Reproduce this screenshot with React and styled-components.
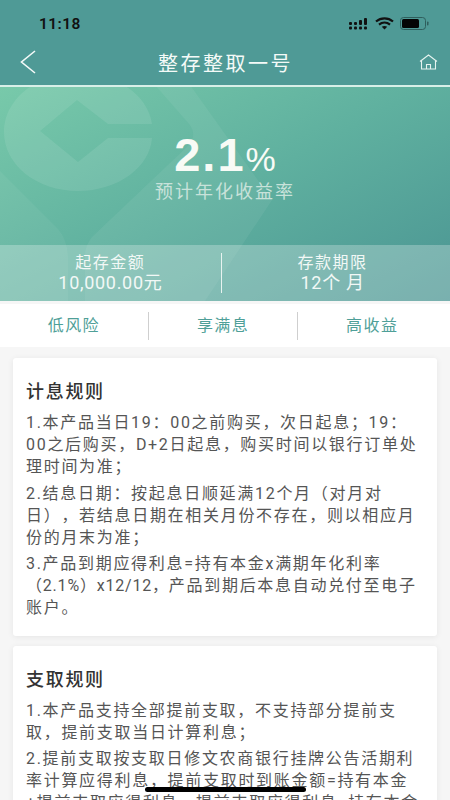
import styled, { createGlobalStyle } from "styled-components";

const GlobalStyle = createGlobalStyle`
  html, body {
    margin: 0;
    padding: 0;
    background: #f6f6f6;
  }
  body {
    width: 450px;
    height: 800px;
    overflow: hidden;
    font-family: "Roboto", "Noto Sans CJK SC", sans-serif;
    text-spacing-trim: space-all;
  }
`;

const Page = styled.div`
  position: relative;
  width: 450px;
  height: 800px;
  overflow: hidden;
  background: #f6f6f6;
`;

const TopBar = styled.header`
  height: 87px;
  background: #4f9a96;
  border-bottom: 2px solid #d8efe8;
  box-sizing: border-box;
  display: flex;
  flex-direction: column;
`;

const StatusRow = styled.div`
  height: 47px;
  display: flex;
  align-items: center;
  justify-content: space-between;
  padding: 0 21px 0 39px;
`;

const Clock = styled.span`
  font-size: 15.5px;
  font-weight: 600;
  color: #111;
  letter-spacing: 0.4px;
`;

const StatusIcons = styled.div`
  display: flex;
  align-items: center;
  gap: 6px;
`;

const NavRow = styled.div`
  flex: 1;
  display: flex;
  align-items: center;
  justify-content: space-between;
  padding: 0 12px 8px 20px;
`;

const NavTitle = styled.h1`
  margin: 0 0 0 -4px;
  font-size: 20px;
  font-weight: 400;
  color: #f4faf8;
  letter-spacing: 2.5px;
`;

const Hero = styled.section`
  position: relative;
  height: 214px;
  overflow: hidden;
  background: linear-gradient(152deg, #78c9aa 0%, #5fb09f 50%, #4b9593 100%);
  display: flex;
  flex-direction: column;
`;

const Watermark = styled.svg`
  position: absolute;
  left: 0;
  top: 0;
`;

const RateBlock = styled.div`
  position: relative;
  flex: 1;
  display: flex;
  flex-direction: column;
  align-items: center;
  padding-top: 45px;
  box-sizing: border-box;
`;

const Rate = styled.div`
  display: flex;
  align-items: baseline;
  color: #f8fbf6;
  line-height: 46px;
`;

const RateValue = styled.span`
  font-family: "Liberation Sans", sans-serif;
  font-size: 47px;
  font-weight: 700;
  letter-spacing: 2px;
`;

const RateUnit = styled.span`
  font-family: "Liberation Sans", sans-serif;
  font-size: 34px;
  font-weight: 400;
`;

const RateLabel = styled.div`
  font-size: 18px;
  color: #c8e2da;
  letter-spacing: 2px;
  line-height: 24px;
  margin-top: -2px;
`;

const Facts = styled.div`
  position: relative;
  height: 56px;
  padding-right: 7px;
  background: rgba(255, 255, 255, 0.26);
  display: flex;
  align-items: center;
`;

const Fact = styled.div`
  flex: 1;
  text-align: center;
  color: #f2f8f6;
  font-size: 16px;
  letter-spacing: 1.5px;
  line-height: 20px;
`;

const FactValue = styled.div`
  font-size: 18px;
  letter-spacing: 0.7px;
`;

const FactDivider = styled.div`
  width: 1.5px;
  height: 40px;
  background: #e8f3f0;
`;

const TagBar = styled.div`
  height: 43px;
  margin-top: 3px;
  padding: 0 4px 3px 0;
  box-sizing: border-box;
  background: #fff;
  display: flex;
  align-items: center;
`;

const Tag = styled.div`
  flex: 1;
  text-align: center;
  color: #4f9f98;
  font-size: 16px;
  letter-spacing: 1.4px;
`;

const TagDivider = styled.div`
  width: 1.5px;
  height: 28px;
  margin-top: 3px;
  background: #cfcfcf;
`;

const Content = styled.main`
  padding: 11px 13px 0;
  display: flex;
  flex-direction: column;
  gap: 10px;
`;

const Card = styled.article`
  background: #fff;
  border-radius: 3px;
  box-shadow: 0 1px 6px rgba(0, 0, 0, 0.07);
  padding: 21px 13px 12px;
`;

const CardTitle = styled.h2`
  margin: 0 0 8px;
  font-size: 18px;
  font-weight: 500;
  letter-spacing: 1.7px;
  line-height: 25px;
  color: #333;
`;

const Paragraph = styled.p`
  margin: 0 0 4.5px;
  font-size: 16px;
  letter-spacing: 1.7px;
  line-height: 22px;
  color: #555;
`;

const TightRun = styled.span`
  letter-spacing: 0.8px;
`;

const HomeIndicator = styled.div`
  position: absolute;
  left: 145px;
  bottom: 8px;
  width: 161px;
  height: 5px;
  border-radius: 3px;
  background: #000;
`;

const SignalIcon = () => (
  <svg width="20" height="12" viewBox="0 0 20 12" fill="#111">
    <rect x="0" y="4" width="3" height="3" rx="1" />
    <rect x="0" y="8.5" width="3" height="3" rx="1" />
    <rect x="5" y="4" width="3" height="3" rx="1" />
    <rect x="5" y="8.5" width="3" height="3" rx="1" />
    <rect x="10" y="2" width="3" height="5" rx="1" />
    <rect x="10" y="8.5" width="3" height="3" rx="1" />
    <rect x="15" y="0" width="3" height="7" rx="1" />
    <rect x="15" y="8.5" width="3" height="3" rx="1" />
  </svg>
);

const WifiIcon = () => (
  <svg width="19" height="13" viewBox="0 0 19 13" fill="none" stroke="#111" strokeWidth="2.2">
    <path d="M1 4.5C6 .2 13 .2 18 4.5" />
    <path d="M4 7.6C7.2 5 11.8 5 15 7.6" />
    <path d="M9.5 12.5 6.8 9.8C8.4 8.8 10.6 8.8 12.2 9.8Z" fill="#111" stroke="none" />
  </svg>
);

const BatteryIcon = () => (
  <svg width="29" height="13" viewBox="0 0 29 13">
    <rect x="0.5" y="0.5" width="25" height="12" rx="3" fill="none" stroke="#2f5f5d" />
    <rect x="2" y="2" width="17" height="9" rx="1.5" fill="#050505" />
    <rect x="27" y="4.5" width="1.5" height="4" rx="0.7" fill="#2f5f5d" />
  </svg>
);

const BackIcon = () => (
  <svg width="16" height="24" viewBox="0 0 16 24" fill="none" stroke="#f4faf8" strokeWidth="1.6">
    <path d="M15 1 1.5 12 15 23" />
  </svg>
);

const HomeIcon = () => (
  <svg width="19" height="16" viewBox="0 0 19 16" fill="none" stroke="#e6f4f0" strokeWidth="1.1">
    <path d="M1 7.5 9.5 1 18 7.5" />
    <path d="M2.5 6.5V15H16.5V6.5" />
    <path d="M7.5 15V10.5H11.5V15" />
  </svg>
);

const App = () => (
  <Page>
    <GlobalStyle />
    <TopBar>
      <StatusRow>
        <Clock>11:18</Clock>
        <StatusIcons>
          <SignalIcon />
          <WifiIcon />
          <BatteryIcon />
        </StatusIcons>
      </StatusRow>
      <NavRow>
        <BackIcon />
        <NavTitle>整存整取一号</NavTitle>
        <HomeIcon />
      </NavRow>
    </TopBar>
    <Hero>
      <Watermark width="450" height="214" viewBox="0 0 450 214" fill="#fff">
        <path
          fillOpacity="0.09"
          fillRule="evenodd"
          d="M78 -14C37 -14 4 12 4 45C4 78 37 104 78 104C118 104 150 80 152 51H108L78 75L40 44L77 13L108 37H152C148 8 116 -14 78 -14Z"
        />
        <path
          fillOpacity="0.06"
          d="M155 -2 190 38Q197 48 189 58L92 150Q84 160 85 172V214H205L272 113 190 -2Z"
        />
        <path fillOpacity="0.05" d="M0 84 58 142Q68 154 68 172V214H0Z" />
      </Watermark>
      <RateBlock>
        <Rate>
          <RateValue>2.1</RateValue>
          <RateUnit>%</RateUnit>
        </Rate>
        <RateLabel>预计年化收益率</RateLabel>
      </RateBlock>
      <Facts>
        <Fact>
          起存金额
          <FactValue>10,000.00元</FactValue>
        </Fact>
        <FactDivider />
        <Fact>
          存款期限
          <FactValue>12个 月</FactValue>
        </Fact>
      </Facts>
    </Hero>
    <TagBar>
      <Tag>低风险</Tag>
      <TagDivider />
      <Tag>享满息</Tag>
      <TagDivider />
      <Tag>高收益</Tag>
    </TagBar>
    <Content>
      <Card>
        <CardTitle>计息规则</CardTitle>
        <Paragraph>
          1.本产品当日19：00之前购买，次日起息；19：
          <br />
          00之后购买，D+2日起息，购买时间以银行订单处理时间为准；
        </Paragraph>
        <Paragraph>2.结息日期：按起息日顺延满12个月（对月对日），若结息日期在相关月份不存在，则以相应月份的月末为准；</Paragraph>
        <Paragraph>
          3.产品到期应得利息=持有本金x满期年化利率<TightRun>（2.1%）x12/12，</TightRun>产品到期后本息自动兑付至电子账户。
        </Paragraph>
      </Card>
      <Card>
        <CardTitle>支取规则</CardTitle>
        <Paragraph>1.本产品支持全部提前支取，不支持部分提前支取，提前支取当日计算利息；</Paragraph>
        <Paragraph>2.提前支取按支取日修文农商银行挂牌公告活期利率计算应得利息，提前支取时到账金额=持有本金+提前支取应得利息。提前支取应得利息=持有本金</Paragraph>
      </Card>
    </Content>
    <HomeIndicator />
  </Page>
);

export default App;
